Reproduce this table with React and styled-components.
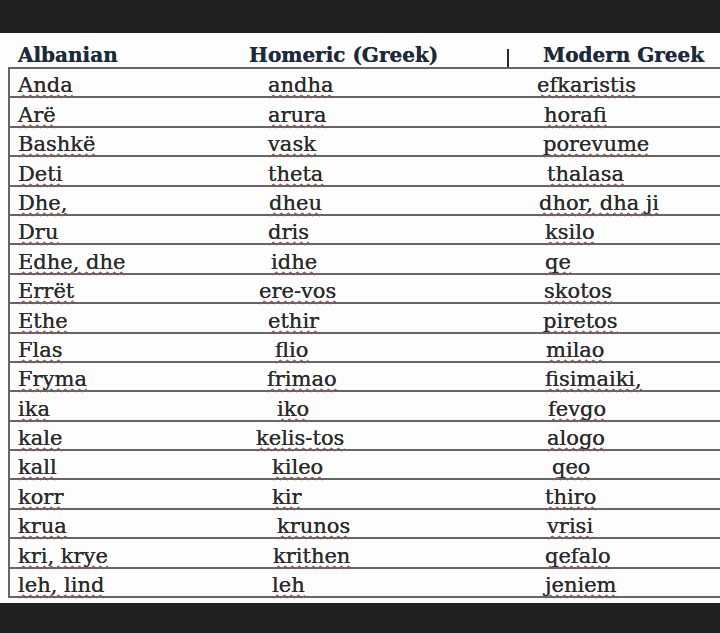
import React from "react";
import styled, { createGlobalStyle } from "styled-components";

const rows = [
  ["Anda", "andha", 28, "efkaristis", 17],
  ["Arë", "arura", 28, "horafi", 24],
  ["Bashkë", "vask", 28, "porevume", 23],
  ["Deti", "theta", 28, "thalasa", 27],
  ["Dhe,", "dheu", 29, "dhor, dha ji", 19],
  ["Dru", "dris", 28, "ksilo", 25],
  ["Edhe, dhe", "idhe", 31, "qe", 25],
  ["Errët", "ere-vos", 19, "skotos", 24],
  ["Ethe", "ethir", 28, "piretos", 23],
  ["Flas", "flio", 35, "milao", 26],
  ["Fryma", "frimao", 27, "fisimaiki,", 25],
  ["ika", "iko", 37, "fevgo", 28],
  ["kale", "kelis-tos", 16, "alogo", 27],
  ["kall", "kileo", 32, "qeo", 32],
  ["korr", "kir", 32, "thiro", 25],
  ["krua", "krunos", 37, "vrisi", 27],
  ["kri, krye", "krithen", 33, "qefalo", 25],
  ["leh, lind", "leh", 32, "jeniem", 25],
];

const GlobalStyle = createGlobalStyle`
  html, body {
    margin: 0;
    padding: 0;
    background: #212121;
  }
  body {
    font-family: "DejaVu Serif", "Liberation Serif", serif;
  }
`;

const Page = styled.div`
  width: 720px;
  height: 633px;
  overflow: hidden;
  display: flex;
  flex-direction: column;
  background: #212121;
`;

const DarkBar = styled.div`
  height: ${(p) => p.h}px;
  flex-shrink: 0;
  background: #202020;
`;

const Sheet = styled.div`
  height: 570px;
  background: #fdfdfd;
  padding-left: 8px;
  display: flex;
  flex-direction: column;
`;

const HeaderRow = styled.div`
  height: 34px;
  display: grid;
  grid-template-columns: 231px 258px 36px 1fr;
  align-items: end;
  padding-left: 10px;
`;

const HeadCell = styled.div`
  font-weight: bold;
  font-size: 20px;
  line-height: 24px;
  color: #1d2a3a;
  white-space: nowrap;
  text-shadow: 0 0 0.5px #1d2a3a;
`;

const Divider = styled.span`
  display: block;
  width: 2px;
  height: 19px;
  background: #2a2a2a;
  margin-bottom: -1px;
`;

const Table = styled.div`
  border-top: 2px solid #666;
  border-left: 2px solid #666;
  display: flex;
  flex-direction: column;
`;

const Row = styled.div`
  box-sizing: border-box;
  height: 29.4px;
  border-bottom: 2px solid #666;
  display: grid;
  grid-template-columns: 230px 280px 1fr;
  align-items: end;
`;

const Cell = styled.div`
  padding-left: ${(p) => p.indent}px;
  font-size: 21px;
  line-height: 21px;
  color: #2b2b2b;
  white-space: nowrap;
  text-shadow: 0 0 0.4px #2b2b2b;

  span {
    text-decoration: underline wavy rgba(170, 110, 110, 0.9);
    text-decoration-thickness: 1px;
    text-underline-offset: 2px;
    text-decoration-skip-ink: none;
  }
`;

export default function App() {
  return (
    <>
      <GlobalStyle />
      <Page>
        <DarkBar h={33} />
        <Sheet>
          <HeaderRow>
            <HeadCell>Albanian</HeadCell>
            <HeadCell>Homeric (Greek)</HeadCell>
            <Divider />
            <HeadCell>Modern Greek</HeadCell>
          </HeaderRow>
          <Table>
            {rows.map(([alb, hom, homIndent, mod, modIndent]) => (
              <Row key={alb}>
                <Cell indent={8}>
                  <span>{alb}</span>
                </Cell>
                <Cell indent={homIndent}>
                  <span>{hom}</span>
                </Cell>
                <Cell indent={modIndent}>
                  <span>{mod}</span>
                </Cell>
              </Row>
            ))}
          </Table>
        </Sheet>
        <DarkBar h={30} />
      </Page>
    </>
  );
}
